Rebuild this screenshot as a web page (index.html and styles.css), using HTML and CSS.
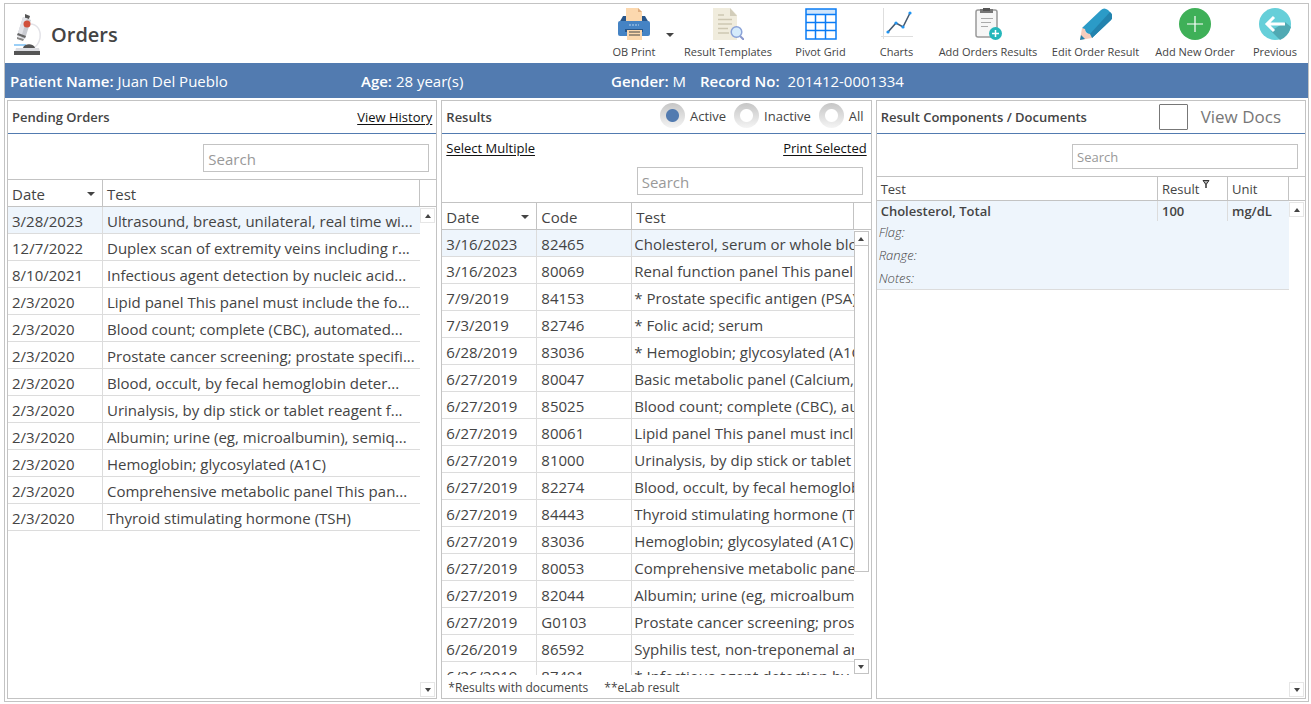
FILE: index.html
```html
<!DOCTYPE html>
<html lang="en">
<head>
<meta charset="utf-8">
<title>Orders</title>
<link rel="stylesheet" href="styles.css">
</head>
<body>
<main class="frame">
  <header class="top">
    <div class="brand">
      <svg class="brand-icon" width="28" height="42" viewBox="0 0 28 42" aria-hidden="true">
        <path d="M16 10 C24 10 27 17 26 24 C25 30 22 33 18 35" fill="none" stroke="#e3e3e8" stroke-width="1.500"/>
        <path d="M11 0l5 2-1 3-4-1z" fill="#555"/>
        <path d="M9 3l8 3-6 19-8-3z" fill="#c9cbd1"/>
        <path d="M9 3l4 1.500-6 19-4-1.500z" fill="#e2e3e8"/>
        <path d="M4 19l8 3-1 2-8-3z" fill="#666"/>
        <path d="M3 23l7 2-1 2-6-2z" fill="#888"/>
        <circle cx="13" cy="10" r="3.500" fill="#d1503b"/>
        <path d="M0 31h12" stroke="#79bff5" stroke-width="1.500"/>
        <path d="M9 34c1-5 11-5 12 0z" fill="#555"/>
        <path d="M2 34h23l1 4H1z" fill="#dcdde2"/>
        <path d="M0 37h26v4H0z" fill="#555"/>
      </svg>
      <h1>Orders</h1>
    </div>
    <nav class="toolbar">
      <button type="button">
        <svg width="32" height="32" viewBox="0 0 32 32" aria-hidden="true">
          <path d="M5 8h22l4 7H1z" fill="#27568b"/>
          <path d="M8 0h12l4 4v9H8z" fill="#fcd8ae"/><path d="M20 0l4 4h-4z" fill="#dfae80"/>
          <path d="M2 13h28q2 0 2 2v11q0 2-2 2H2q-2 0-2-2V15q0-2 2-2z" fill="#4583c4"/>
          <path d="M11 17h10" stroke="#b5d3ef" stroke-width="1.200" stroke-dasharray="2 1"/>
          <path d="M7 21h18v3H7z" fill="#27568b"/>
          <path d="M9 22h15v10H9z" fill="#fcd8ae"/>
          <path d="M11 24h11M11 27h11" stroke="#444" stroke-width="1.200"/>
        </svg>
        <span>OB Print</span>
      </button>
      <button type="button" class="more" aria-label="More print options"><i class="tri"></i></button>
      <button type="button">
        <svg width="32" height="32" viewBox="0 0 32 32" aria-hidden="true">
          <path d="M1 0h17l7 7v25H1z" fill="#f0ecdd"/><path d="M18 0l7 8h-7z" fill="#d2cdba"/>
          <path d="M6 7h6M6 11.500h14M6 16h14M6 20.500h10M6 25h11" stroke="#cdc7b2" stroke-width="1.300"/>
          <path d="M28 28l4 4" stroke="#8b98cc" stroke-width="2"/>
          <circle cx="24.500" cy="24" r="5.300" fill="#d5ebfb" stroke="#8ba3d8" stroke-width="1.500"/>
        </svg>
        <span>Result Templates</span>
      </button>
      <button type="button">
        <svg width="32" height="32" viewBox="0 0 32 32" aria-hidden="true">
          <path d="M1 1h30v30H1z" fill="#fff"/><path d="M1 1h30v5H1z" fill="#cfe5fb"/>
          <path d="M1 1h30v30H1zM1 6.500h30M1 14.500h30M1 22.500h30M10.500 6v25M20.500 6v25" fill="none" stroke="#0a7cf5" stroke-width="1.500"/>
        </svg>
        <span>Pivot Grid</span>
      </button>
      <button type="button">
        <svg width="32" height="32" viewBox="0 0 32 32" aria-hidden="true">
          <path d="M2.500 0v31M0 28.500h32" stroke="#dedede" fill="none"/>
          <path d="M7 24l8-9 7 4 7-14" fill="none" stroke="#465a70" stroke-width="1.600"/>
          <g fill="#1f93f0"><circle cx="7" cy="24" r="1.600"/><circle cx="15" cy="15" r="1.600"/><circle cx="22" cy="19" r="1.600"/><circle cx="29" cy="5" r="1.600"/></g>
        </svg>
        <span>Charts</span>
      </button>
      <button type="button">
        <svg width="32" height="32" viewBox="0 0 32 32" aria-hidden="true">
          <rect x="4" y="2" width="21" height="27" rx="2" fill="#f6f6f6" stroke="#999" stroke-width="1.500"/>
          <path d="M8 1h13v4H8z" fill="#777"/><path d="M11 0h7v3h-7z" fill="#555"/>
          <path d="M9 10.500h12M9 14.500h10M9 18.500h7" stroke="#aaa"/>
          <circle cx="23.500" cy="25.500" r="6.500" fill="#25b7bb"/><path d="M23.500 22v7M20 25.500h7" stroke="#fff" stroke-width="1.500"/>
        </svg>
        <span>Add Orders Results</span>
      </button>
      <button type="button">
        <svg width="32" height="32" viewBox="0 0 32 32" aria-hidden="true">
          <path d="M2 20L21 2q3-3 7 0l3 3q3 3 0 7L12 30z" fill="#2b9bc7"/>
          <path d="M9 27L30 4q4 4 1 8L12 30z" fill="#2383ae"/>
          <path d="M2 20l3 1 1 4 4 1 2 4L0 32z" fill="#f6cdbd"/>
          <path d="M1 27l4 4-5 1z" fill="#2383ae"/>
        </svg>
        <span>Edit Order Result</span>
      </button>
      <button type="button">
        <svg width="32" height="32" viewBox="0 0 32 32" aria-hidden="true">
          <circle cx="16" cy="16" r="16" fill="#3fb058"/><path d="M16 8v16M8 16h16" stroke="#fff" stroke-width="1.200"/>
        </svg>
        <span>Add New Order</span>
      </button>
      <button type="button">
        <svg width="32" height="32" viewBox="0 0 32 32" aria-hidden="true">
          <circle cx="16" cy="16" r="16" fill="#66cfd9"/>
          <path d="M26 14l6 5q-3 10-11 13l-9-9z" fill="#50a9b3"/>
          <path d="M26 16H8M15 9l-7 7 7 7" fill="none" stroke="#fff" stroke-width="3"/>
        </svg>
        <span>Previous</span>
      </button>
    </nav>
  </header>

  <section class="patient">
    <p><b>Patient Name:</b> Juan Del Pueblo</p>
    <p><b>Age:</b> 28 year(s)</p>
    <p class="ids"><span><b>Gender:</b> M</span><span class="record"><b>Record No:</b> <span>201412-0001334</span></span></p>
  </section>

  <div class="panels">
    <section class="panel">
      <div class="panel-head"><h2>Pending Orders</h2><a href="#history">View History</a></div>
      <div class="find"><input type="text" placeholder="Search" aria-label="Search pending orders"></div>
      <div class="list">
        <table>
          <colgroup><col class="c-date"><col><col class="c-bar"></colgroup>
          <thead><tr><th><span class="sort">Date<i class="tri"></i></span></th><th>Test</th><th></th></tr></thead>
          <tbody>
            <tr class="on"><td>3/28/2023</td><td>Ultrasound, breast, unilateral, real time wi...</td><td></td></tr>
            <tr><td>12/7/2022</td><td>Duplex scan of extremity veins including r...</td><td></td></tr>
            <tr><td>8/10/2021</td><td>Infectious agent detection by nucleic acid...</td><td></td></tr>
            <tr><td>2/3/2020</td><td>Lipid panel This panel must include the fo...</td><td></td></tr>
            <tr><td>2/3/2020</td><td>Blood count; complete (CBC), automated...</td><td></td></tr>
            <tr><td>2/3/2020</td><td>Prostate cancer screening; prostate specifi...</td><td></td></tr>
            <tr><td>2/3/2020</td><td>Blood, occult, by fecal hemoglobin deter...</td><td></td></tr>
            <tr><td>2/3/2020</td><td>Urinalysis, by dip stick or tablet reagent f...</td><td></td></tr>
            <tr><td>2/3/2020</td><td>Albumin; urine (eg, microalbumin), semiq...</td><td></td></tr>
            <tr><td>2/3/2020</td><td>Hemoglobin; glycosylated (A1C)</td><td></td></tr>
            <tr><td>2/3/2020</td><td>Comprehensive metabolic panel This pan...</td><td></td></tr>
            <tr><td>2/3/2020</td><td>Thyroid stimulating hormone (TSH)</td><td></td></tr>
          </tbody>
        </table>
        <div class="scroll idle"><button type="button" aria-label="Scroll up"><i class="tri up"></i></button><button type="button" aria-label="Scroll down"><i class="tri"></i></button></div>
      </div>
    </section>

    <section class="panel">
      <div class="panel-head">
        <h2>Results</h2>
        <div class="radios">
          <label><input type="radio" name="state" checked>Active</label>
          <label><input type="radio" name="state">Inactive</label>
          <label><input type="radio" name="state">All</label>
        </div>
      </div>
      <div class="links"><a href="#multiple">Select Multiple</a><a href="#print">Print Selected</a></div>
      <div class="find low"><input type="text" placeholder="Search" aria-label="Search results"></div>
      <div class="list results">
        <table>
          <colgroup><col class="c-date"><col class="c-date"><col><col class="c-bar"></colgroup>
          <thead><tr><th><span class="sort">Date<i class="tri"></i></span></th><th>Code</th><th>Test</th><th></th></tr></thead>
          <tbody>
            <tr class="on"><td>3/16/2023</td><td>82465</td><td>Cholesterol, serum or whole blood</td><td></td></tr>
            <tr><td>3/16/2023</td><td>80069</td><td>Renal function panel This panel</td><td></td></tr>
            <tr><td>7/9/2019</td><td>84153</td><td>* Prostate specific antigen (PSA)</td><td></td></tr>
            <tr><td>7/3/2019</td><td>82746</td><td>* Folic acid; serum</td><td></td></tr>
            <tr><td>6/28/2019</td><td>83036</td><td>* Hemoglobin; glycosylated (A1C)</td><td></td></tr>
            <tr><td>6/27/2019</td><td>80047</td><td>Basic metabolic panel (Calcium,</td><td></td></tr>
            <tr><td>6/27/2019</td><td>85025</td><td>Blood count; complete (CBC), automated</td><td></td></tr>
            <tr><td>6/27/2019</td><td>80061</td><td>Lipid panel This panel must include</td><td></td></tr>
            <tr><td>6/27/2019</td><td>81000</td><td>Urinalysis, by dip stick or tablet</td><td></td></tr>
            <tr><td>6/27/2019</td><td>82274</td><td>Blood, occult, by fecal hemoglobin</td><td></td></tr>
            <tr><td>6/27/2019</td><td>84443</td><td>Thyroid stimulating hormone (TSH)</td><td></td></tr>
            <tr><td>6/27/2019</td><td>83036</td><td>Hemoglobin; glycosylated (A1C)</td><td></td></tr>
            <tr><td>6/27/2019</td><td>80053</td><td>Comprehensive metabolic panel</td><td></td></tr>
            <tr><td>6/27/2019</td><td>82044</td><td>Albumin; urine (eg, microalbumin)</td><td></td></tr>
            <tr><td>6/27/2019</td><td>G0103</td><td>Prostate cancer screening; prostate</td><td></td></tr>
            <tr><td>6/26/2019</td><td>86592</td><td>Syphilis test, non-treponemal antibody</td><td></td></tr>
            <tr><td>6/26/2019</td><td>87491</td><td>* Infectious agent detection by</td><td></td></tr>
          </tbody>
        </table>
        <div class="scroll"><button type="button" aria-label="Scroll up"><i class="tri up"></i></button><div class="track"><div class="thumb"></div></div><button type="button" aria-label="Scroll down"><i class="tri"></i></button></div>
      </div>
      <footer class="notes"><span>*Results with documents</span><span>**eLab result</span></footer>
    </section>

    <section class="panel">
      <div class="panel-head"><h2>Result Components / Documents</h2><label class="docs"><input type="checkbox">View Docs</label></div>
      <div class="find small"><input type="text" placeholder="Search" aria-label="Search components"></div>
      <div class="list compact">
        <table>
          <colgroup><col><col class="c-result"><col class="c-unit"><col class="c-bar"></colgroup>
          <thead><tr><th>Test</th><th><span class="filtered">Result<svg width="8" height="9" viewBox="0 0 8 9" aria-hidden="true"><path d="M1 1.500h6L4.500 5H3.500z" fill="#aaa" stroke="#333"/><path d="M4 5v4" stroke="#333" stroke-width="1.500"/></svg></span></th><th>Unit</th><th></th></tr></thead>
          <tbody>
            <tr class="on strong"><td>Cholesterol, Total</td><td>100</td><td>mg/dL</td><td></td></tr>
            <tr class="on detail"><td colspan="3">Flag:</td><td></td></tr>
            <tr class="on detail"><td colspan="3">Range:</td><td></td></tr>
            <tr class="on detail last"><td colspan="3">Notes:</td><td></td></tr>
          </tbody>
        </table>
        <div class="scroll idle"><button type="button" aria-label="Scroll up"><i class="tri up"></i></button><button type="button" aria-label="Scroll down"><i class="tri"></i></button></div>
      </div>
    </section>
  </div>
</main>
</body>
</html>
```
FILE: styles.css
```css
* { box-sizing: border-box; }
body {
  margin: 0;
  height: 100vh;
  padding: 3px 2px 2px 4px;
  background: #fff;
  color: #444;
  font: 15px/20px "Open Sans", "Noto Sans", sans-serif;
}
h1, h2, p { margin: 0; }
button { border: 0; padding: 0; background: none; color: inherit; font: inherit; }
.frame { height: 100%; display: flex; flex-direction: column; border: 1px solid #c3c3c3; }

.top { display: flex; justify-content: space-between; height: 59px; flex: none; }
.brand { display: flex; align-items: center; gap: 9px; padding: 0 0 0 9px; }
.brand-icon { margin-top: 2px; }
.brand h1 { font-size: 20px; line-height: 28px; font-weight: 600; padding-top: 2px; }
.toolbar { display: grid; grid-template-columns: 60px 12px 104px 81px 71px 112px 103px 96px 64px; padding: 4px 1px 0 0; }
.toolbar button { display: flex; flex-direction: column; align-items: center; gap: 4px; font-size: 11px; line-height: 16px; white-space: nowrap; }
.toolbar .more { padding-top: 25px; }
.tri { display: block; border: 4px solid transparent; border-top: 4px solid #444; border-bottom: 0; }
.tri.up { border-top: 0; border-bottom: 4px solid #444; }

.patient {
  display: grid;
  grid-template-columns: 351fr 250fr 697fr;
  align-items: center;
  flex: none;
  height: 35px;
  padding: 0 0 0 5px;
  background: #527bb0;
  color: #fff;
  white-space: nowrap;
}
.patient b { font-weight: 600; }
.ids { display: flex; gap: 14px; }
.record { display: flex; gap: 8px; }

.panels { flex: 1; min-height: 0; display: grid; grid-template-columns: repeat(3, minmax(0, 1fr)); gap: 4px; padding: 2px; }
.panel { display: flex; flex-direction: column; min-height: 0; border: 1px solid #c3c3c3; }
.panel-head { display: flex; justify-content: space-between; align-items: center; flex: none; height: 33px; padding: 0 4px; border-bottom: 1px solid #527bb0; white-space: nowrap; }
.panel h2 { font-size: 13px; font-weight: 600; }
a { color: #111; font-size: 13px; text-underline-offset: 2px; }
.find { display: flex; justify-content: flex-end; flex: none; padding: 10px 7px 7px; }
.find input { width: 226px; height: 28px; border: 1px solid #c3c3c3; padding: 2px 4px 0; font: inherit; color: #444; outline: 0; }
.find input::placeholder { color: #999; opacity: 1; }
.find.small input { height: 25px; font-size: 13px; padding-top: 0; }
.find.low { padding: 4px 8px 7px; }
.links { display: flex; justify-content: space-between; flex: none; height: 29px; padding: 4px 4px 0; }

.radios { display: flex; gap: 8px; padding: 0 3px 3px 0; }
.radios label { display: flex; align-items: center; gap: 5px; font-size: 13px; }
.radios input {
  appearance: none;
  margin: 0;
  width: 25px;
  height: 25px;
  border-radius: 50%;
  background: radial-gradient(circle, #fff 6px, transparent 7px), linear-gradient(#c6c6c6, #f4f4f4);
}
.radios input:checked { background: radial-gradient(circle, #527bb0 6px, transparent 7px), linear-gradient(#c6c6c6, #f4f4f4); }
.docs { display: flex; align-items: center; gap: 13px; padding-right: 20px; color: #777; font-size: 17px; }
.docs input { appearance: none; margin: 0; width: 29px; height: 26px; border: 1px solid #777; border-radius: 1px; }

.list { position: relative; flex: 1; min-height: 0; overflow: hidden; }
table { width: 100%; table-layout: fixed; border-collapse: separate; border-spacing: 0; }
.c-date { width: 95px; }
.c-bar { width: 16px; }
.results .c-bar { width: 17px; }
.c-result { width: 70px; }
.c-unit { width: 61px; }
th { height: 28px; padding: 2px 4px 0; border: solid #c3c3c3; border-width: 1px 1px 1px 0; font-weight: 400; text-align: left; line-height: 24px; }
th:last-child { border-right: 0; }
.sort { display: flex; justify-content: space-between; align-items: center; padding-right: 3px; }
td { padding: 2px 4px 0; border: solid #dcdcdc; border-width: 0 1px 1px 0; line-height: 24px; white-space: nowrap; overflow: hidden; }
td:nth-last-child(2) { border-right: 0; }
td:last-child { border: 0; padding: 0; }
.on td:not(:last-child) { background: #eef5fc; }
.results td:nth-child(3) { padding: 2px 0 0 2px; }

.compact { font-size: 13px; }
.compact th { height: 25px; padding-top: 1px; line-height: 22px; }
.compact td { padding-top: 0; }
.filtered { display: flex; gap: 3px; }
.filtered svg { margin-top: 1px; }
.strong td { font-weight: 600; line-height: 20px; border-bottom: 0; }
.detail td { padding-left: 2px; border: 0; font-style: italic; font-weight: 300; line-height: 23px; }
.detail.last td:first-child { border-bottom: 1px solid #dcdcdc; line-height: 22px; }

/* the scrollbar lies over the empty last column, below the column headings */
.scroll { position: absolute; top: 29px; right: 1px; bottom: 1px; width: 15px; display: flex; flex-direction: column; justify-content: space-between; }
.results .scroll { right: 2px; }
.compact .scroll { top: 26px; }
.scroll button { display: grid; place-items: center; flex: none; height: 15px; border: 1px solid #c3c3c3; }
.scroll.idle button { border-color: #e6e6e6; }
.scroll .tri { border-left-width: 3px; border-right-width: 3px; border-top-width: 4px; }
.scroll .tri.up { border-top-width: 0; border-bottom-width: 4px; }
.track { flex: 1; }
.thumb { height: 79%; border: 1px solid #c3c3c3; border-top: 0; }
.notes { display: flex; gap: 16px; flex: none; height: 23px; padding: 3px 6px 0; font-size: 12px; }
```
